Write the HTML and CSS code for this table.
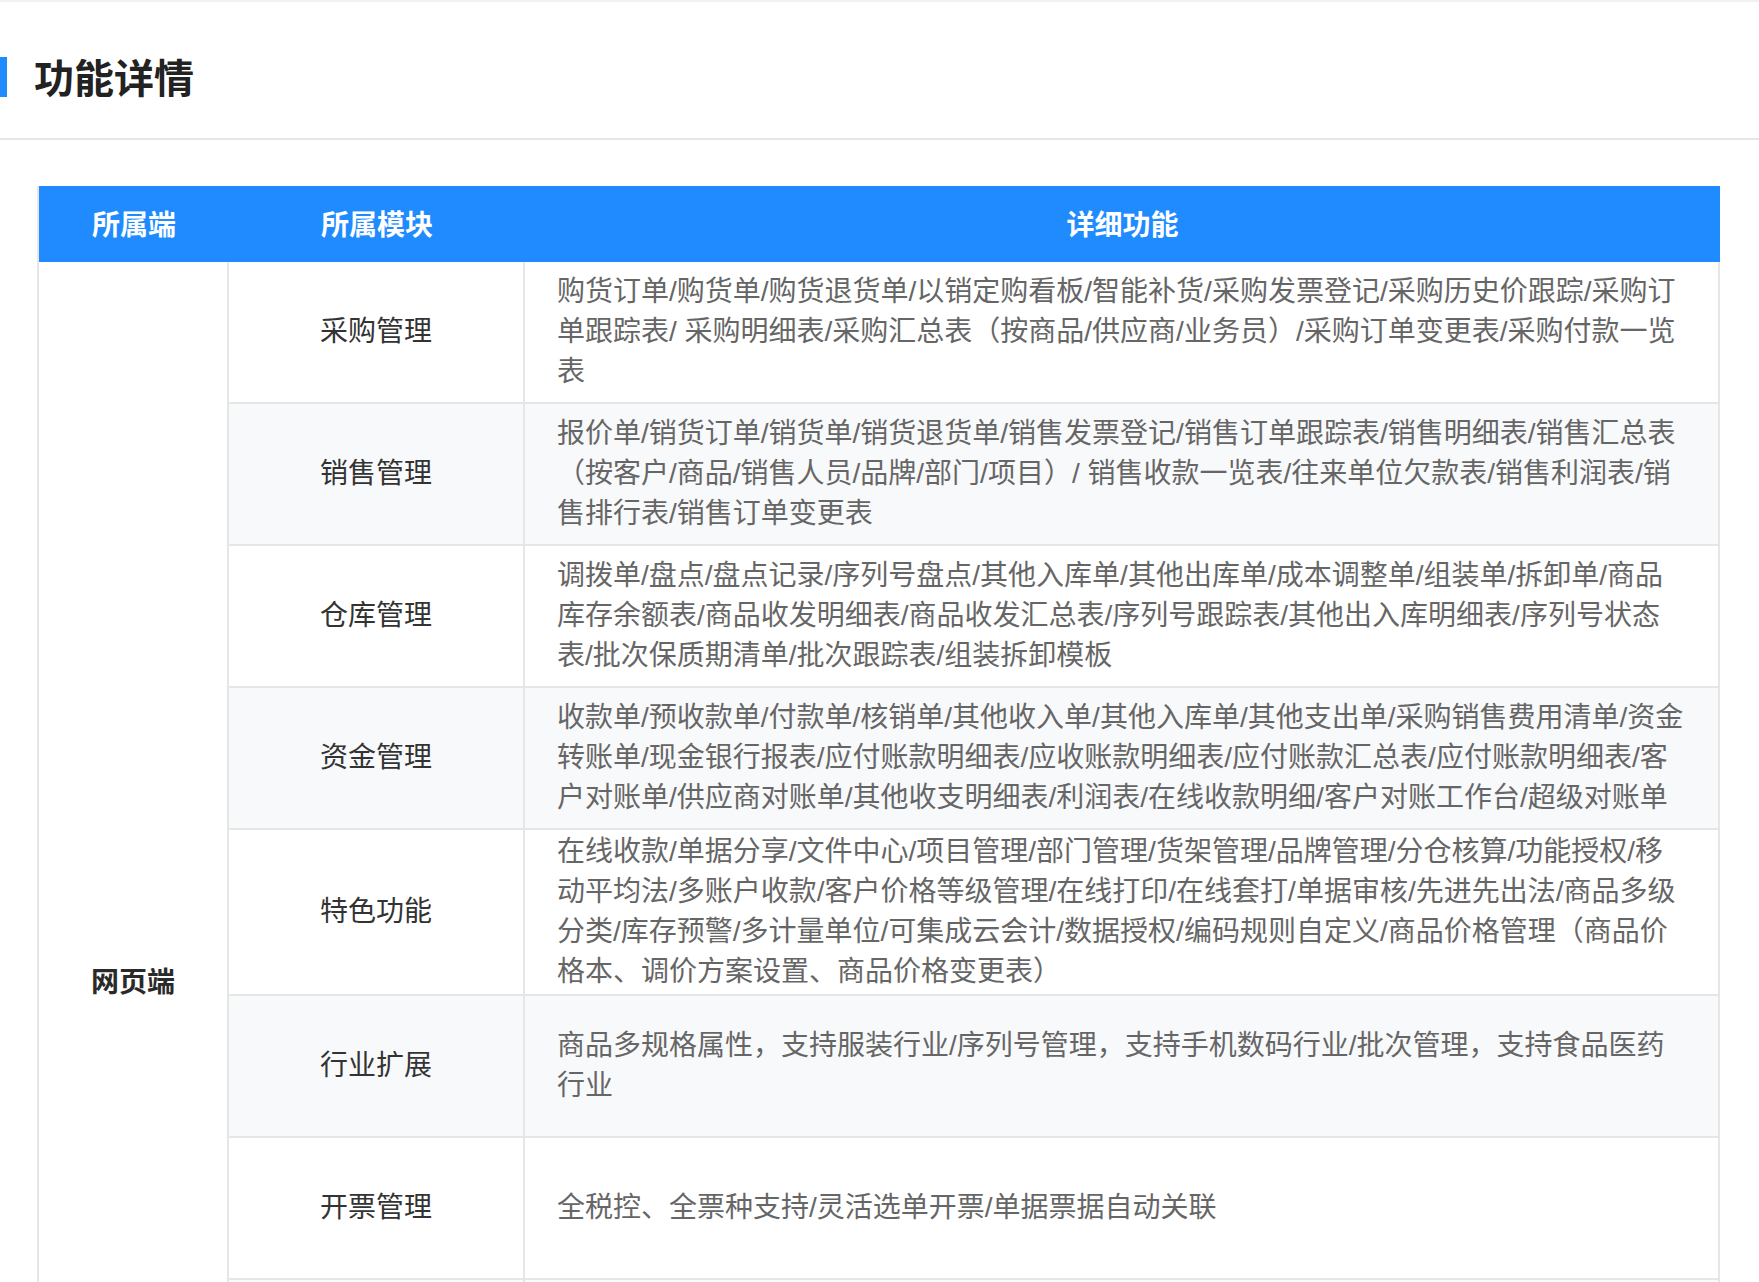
FILE: index.html
```html
<!DOCTYPE html>
<html lang="zh-CN">
<head>
<meta charset="utf-8">
<title>功能详情</title>
<link rel="stylesheet" href="styles.css">
</head>
<body>
<section class="detail">
  <header class="detail-head">
    <span class="detail-bar"></span>
    <h2 class="detail-title">功能详情</h2>
  </header>
  <div class="detail-body">
    <table class="feature-table">
      <thead>
        <tr>
          <th class="col-end">所属端</th>
          <th class="col-module">所属模块</th>
          <th class="col-desc">详细功能</th>
        </tr>
      </thead>
      <tbody>
        <tr>
          <td class="cell-end" rowspan="10">网页端</td>
          <td class="cell-module">采购管理</td>
          <td class="cell-desc">购货订单/购货单/购货退货单/以销定购看板/智能补货/采购发票登记/采购历史价跟踪/采购订单跟踪表/ 采购明细表/采购汇总表（按商品/供应商/业务员）/采购订单变更表/采购付款一览表</td>
        </tr>
        <tr class="row-alt">
          <td class="cell-module">销售管理</td>
          <td class="cell-desc">报价单/销货订单/销货单/销货退货单/销售发票登记/销售订单跟踪表/销售明细表/销售汇总表（按客户/商品/销售人员/品牌/部门/项目）/ 销售收款一览表/往来单位欠款表/销售利润表/销售排行表/销售订单变更表</td>
        </tr>
        <tr>
          <td class="cell-module">仓库管理</td>
          <td class="cell-desc">调拨单/盘点/盘点记录/序列号盘点/其他入库单/其他出库单/成本调整单/组装单/拆卸单/商品库存余额表/商品收发明细表/商品收发汇总表/序列号跟踪表/其他出入库明细表/序列号状态表/批次保质期清单/批次跟踪表/组装拆卸模板</td>
        </tr>
        <tr class="row-alt">
          <td class="cell-module">资金管理</td>
          <td class="cell-desc">收款单/预收款单/付款单/核销单/其他收入单/其他入库单/其他支出单/采购销售费用清单/资金转账单/现金银行报表/应付账款明细表/应收账款明细表/应付账款汇总表/应付账款明细表/客户对账单/供应商对账单/其他收支明细表/利润表/在线收款明细/客户对账工作台/超级对账单</td>
        </tr>
        <tr>
          <td class="cell-module">特色功能</td>
          <td class="cell-desc">在线收款/单据分享/文件中心/项目管理/部门管理/货架管理/品牌管理/分仓核算/功能授权/移动平均法/多账户收款/客户价格等级管理/在线打印/在线套打/单据审核/先进先出法/商品多级分类/库存预警/多计量单位/可集成云会计/数据授权/编码规则自定义/商品价格管理（商品价格本、调价方案设置、商品价格变更表）</td>
        </tr>
        <tr class="row-alt">
          <td class="cell-module">行业扩展</td>
          <td class="cell-desc">商品多规格属性，支持服装行业/序列号管理，支持手机数码行业/批次管理，支持食品医药行业</td>
        </tr>
        <tr>
          <td class="cell-module">开票管理</td>
          <td class="cell-desc">全税控、全票种支持/灵活选单开票/单据票据自动关联</td>
        </tr>
        <tr class="row-alt">
          <td class="cell-module">报表中心</td>
          <td class="cell-desc">经营分析/进销存报表/往来报表/资金报表</td>
        </tr>
        <tr>
          <td class="cell-module">基础资料</td>
          <td class="cell-desc">商品/客户/供应商/职员/仓库/结算账户</td>
        </tr>
        <tr class="row-alt">
          <td class="cell-module">系统设置</td>
          <td class="cell-desc">系统参数/权限设置/打印模板/操作日志</td>
        </tr>
      </tbody>
    </table>
  </div>
</section>
</body>
</html>
```

FILE: styles.css
```css
* {
  box-sizing: border-box;
}

html, body {
  margin: 0;
  padding: 0;
  background: #ffffff;
}

body {
  font-family: "Liberation Sans", "Noto Sans CJK SC", sans-serif;
  color: #333333;
}

.detail {
  border-top: 2px solid #f0f1f3;
}

.detail-head {
  display: flex;
  align-items: center;
  padding: 55px 0 41px;
  border-bottom: 2px solid #e6e6e6;
}

.detail-bar {
  width: 7px;
  height: 40px;
  background: #1f8bff;
  flex: none;
}

.detail-title {
  margin: -3px 0 0 27px;
  font-family: "Noto Sans CJK SC", sans-serif;
  font-size: 40px;
  line-height: 40px;
  font-weight: 700;
  color: #222222;
}

.detail-body {
  padding: 46px 39px 0 37px;
}

.feature-table {
  width: 1683px;
  table-layout: fixed;
  border-collapse: separate;
  border-spacing: 0;
  border-left: 2px solid #e6e6e6;
  font-size: 28px;
}

.feature-table th {
  height: 76px;
  padding: 0 0 3px;
  background: #1f8bff;
  color: #ffffff;
  font-family: "Noto Sans CJK SC", sans-serif;
  font-weight: 700;
  font-size: 28px;
  line-height: 40px;
  text-align: center;
  vertical-align: middle;
}

.col-end {
  width: 190px;
}

.col-module {
  width: 296px;
}

.feature-table td {
  height: 142px;
  padding: 2px 0;
  line-height: 40px;
  border-right: 2px solid #e6e6e6;
  border-bottom: 2px solid #e6e6e6;
  vertical-align: middle;
  background: #ffffff;
}

.feature-table .row-alt td {
  background: #f8f9fb;
}

.feature-table .cell-end {
  text-align: center;
  font-weight: 700;
  color: #2a2a2a;
  background: #ffffff;
}

.cell-module {
  text-align: center;
  color: #333333;
}

.feature-table td.cell-desc {
  padding: 2px 32px 2px 32px;
  color: #666666;
  text-align: left;
}
```
